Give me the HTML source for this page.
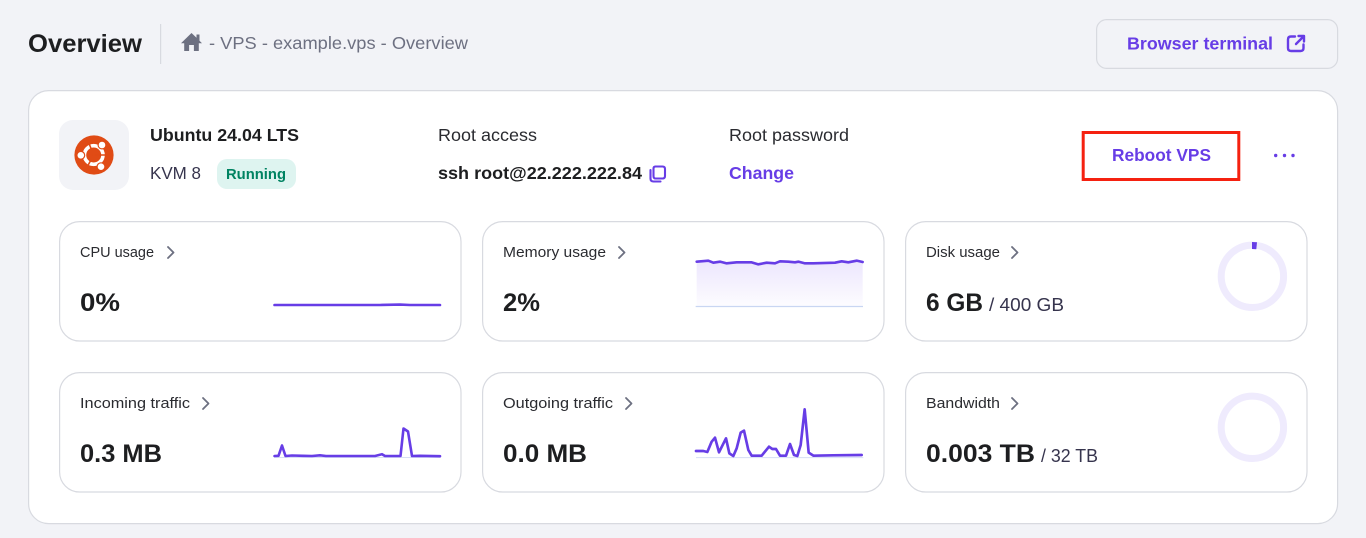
<!DOCTYPE html>
<html lang="en"><head><meta charset="utf-8"><title>Overview</title>
<style>
html,body{margin:0;padding:0;background:#f2f3f7;width:1366px;height:538px;overflow:hidden}
svg{display:block}
text{font-family:"Liberation Sans",sans-serif;fill:#1d1e20;font-size:17.5px}
.b{font-weight:bold}
.p{fill:#673de6}
.t{font-size:15px;fill:#2a2b30}
.v{font-size:25px;font-weight:bold}
.s{font-size:18px;fill:#36344d}
.c{fill:#fff;stroke:#d8dae0;stroke-width:1.2}
.ch{fill:none;stroke:#6d7081;stroke-width:1.8;stroke-linecap:round;stroke-linejoin:round}
.l{fill:none;stroke:#673de6;stroke-width:2.6;stroke-linejoin:round;stroke-linecap:round}
.i{fill:none;stroke:#673de6;stroke-width:2.1;stroke-linejoin:round;stroke-linecap:round}
</style></head>
<body>
<svg width="1366" height="538" viewBox="0 0 1366 538" xmlns="http://www.w3.org/2000/svg">
<defs><linearGradient id="g" x1="0" y1="0" x2="0" y2="1"><stop offset="0" stop-color="#ece6fd"/><stop offset="1" stop-color="#fdfcff"/></linearGradient></defs>

<text x="28" y="52" class="b" style="font-size:25px" textLength="114" lengthAdjust="spacingAndGlyphs">Overview</text>
<rect x="160" y="24" width="1.2" height="40" fill="#d8dae0"/>
<path d="M191.500 33 L196.500 37.800 V34.500 H199.500 V40.700 L202 43.300 H198.800 V51 H193.900 V45 H189.100 V51 H184.200 V43.300 H181 Z" fill="#6d7081"/>
<text x="209" y="49" style="fill:#6d7081" textLength="259" lengthAdjust="spacingAndGlyphs">- VPS - example.vps - Overview</text>

<rect x="1096.600" y="19.600" width="241" height="48.800" rx="10" fill="#f2f3f7" stroke="#d8dae0" stroke-width="1.2"/>
<text x="1127" y="49.500" class="b p" textLength="146" lengthAdjust="spacingAndGlyphs">Browser terminal</text>
<path class="i" style="stroke-width:2.4" d="M1295 36.500 H1291 Q1288 36.500 1288 39.500 V48 Q1288 51 1291 51 H1300.500 Q1303.500 51 1303.500 48 V44.500 M1296 44 L1304 36 M1298.500 36 H1304 V41.500"/>

<rect x="28.600" y="90.600" width="1309" height="433" rx="20" fill="#fff" stroke="#d8dae0" stroke-width="1.2"/>

<rect x="59" y="120" width="70" height="70" rx="14" fill="#f2f3f7"/>
<circle cx="94" cy="155" r="19.600" fill="#e04b15"/>
<circle cx="93.700" cy="155" r="9.300" fill="none" stroke="#fff" stroke-width="3.600"/>
<path d="M93.700 155 L88 141 M93.700 155 L109 155 M93.700 155 L86 169" stroke="#e04b15" stroke-width="1.600"/>
<circle cx="102" cy="145" r="4.500" fill="#e04b15"/><circle cx="102" cy="145" r="3.300" fill="#fff"/>
<circle cx="80.800" cy="155.300" r="4.500" fill="#e04b15"/><circle cx="80.800" cy="155.300" r="3.300" fill="#fff"/>
<circle cx="101" cy="166.700" r="4.500" fill="#e04b15"/><circle cx="101" cy="166.700" r="3.300" fill="#fff"/>

<text x="150" y="141" class="b" textLength="149" lengthAdjust="spacingAndGlyphs">Ubuntu 24.04 LTS</text>
<text x="150" y="179" style="fill:#36344d" textLength="51" lengthAdjust="spacingAndGlyphs">KVM 8</text>
<rect x="217" y="159" width="79" height="30" rx="10" fill="#def4f0"/>
<text x="226" y="179" class="b" style="font-size:15px;fill:#008362" textLength="60" lengthAdjust="spacingAndGlyphs">Running</text>

<text x="438" y="141" style="fill:#2a2b30" textLength="99" lengthAdjust="spacingAndGlyphs">Root access</text>
<text x="438" y="179" class="b" textLength="204" lengthAdjust="spacingAndGlyphs">ssh root@22.222.222.84</text>
<path class="i" d="M655 166.500 H662.500 Q665 166.500 665 169 V176 Q665 178.500 662.500 178.500 H655.500 Q653.500 178.500 653.500 176 V168.500 Q653.500 166.500 655.500 166.500 Z M650.500 170 V178.500 Q650.500 181.500 653.500 181.500 H660.500"/>

<text x="729" y="141" style="fill:#2a2b30" textLength="120" lengthAdjust="spacingAndGlyphs">Root password</text>
<text x="729" y="179" class="b p" textLength="65" lengthAdjust="spacingAndGlyphs">Change</text>

<rect x="1083.200" y="132.500" width="155.600" height="47" fill="#fff" stroke="#f52110" stroke-width="3"/>
<text x="1112" y="161" class="b p" textLength="99" lengthAdjust="spacingAndGlyphs">Reboot VPS</text>
<circle cx="1275.700" cy="155.500" r="1.700" fill="#673de6"/><circle cx="1284.500" cy="155.500" r="1.700" fill="#673de6"/><circle cx="1293" cy="155.500" r="1.700" fill="#673de6"/>

<rect class="c" x="59.600" y="221.600" width="401.400" height="119.400" rx="20"/>
<rect class="c" x="482.600" y="221.600" width="401.400" height="119.400" rx="20"/>
<rect class="c" x="905.600" y="221.600" width="401.400" height="119.400" rx="20"/>
<rect class="c" x="59.600" y="372.600" width="401.400" height="119.400" rx="20"/>
<rect class="c" x="482.600" y="372.600" width="401.400" height="119.400" rx="20"/>
<rect class="c" x="905.600" y="372.600" width="401.400" height="119.400" rx="20"/>

<text class="t" x="80" y="257" textLength="74" lengthAdjust="spacingAndGlyphs">CPU usage</text>
<path class="ch" d="M168 247 L173.500 252.500 L168 258"/>
<text class="v" x="80" y="311" textLength="40" lengthAdjust="spacingAndGlyphs">0%</text>
<path class="l" d="M274.500 305 H380 L400 304.600 L410 305 H440"/>

<text class="t" x="503" y="257" textLength="103" lengthAdjust="spacingAndGlyphs">Memory usage</text>
<path class="ch" d="M619 247 L624.500 252.500 L619 258"/>
<text class="v" x="503" y="311" textLength="37" lengthAdjust="spacingAndGlyphs">2%</text>
<g transform="translate(680 240) scale(.33333)">
<path fill="url(#g)" d="M50 65 L85 62 L100 68 L120 65 L140 70 L170 67 L215 67 L235 73 L260 68 L285 70 L300 64 L325 65 L345 67 L355 65 L375 70 L400 70 L465 68 L485 64 L505 67 L530 62 L548 66 V199 H50 Z"/>
<path fill="none" stroke="#c9d6f2" stroke-width="3.500" d="M47 199.500 H549"/>
<path fill="none" stroke="#673de6" stroke-width="7.800" stroke-linejoin="round" stroke-linecap="round" d="M50 65 L85 62 L100 68 L120 65 L140 70 L170 67 L215 67 L235 73 L260 68 L285 70 L300 64 L325 65 L345 67 L355 65 L375 70 L400 70 L465 68 L485 64 L505 67 L530 62 L548 66"/>
</g>

<text class="t" x="926" y="257" textLength="74" lengthAdjust="spacingAndGlyphs">Disk usage</text>
<path class="ch" d="M1012 247 L1017.500 252.500 L1012 258"/>
<text class="v" x="926" y="311" textLength="57" lengthAdjust="spacingAndGlyphs">6 GB</text>
<text class="s" x="989" y="311" textLength="75" lengthAdjust="spacingAndGlyphs">/ 400 GB</text>
<circle cx="1252.400" cy="276.300" r="31.200" fill="none" stroke="#efebfd" stroke-width="7"/>
<path d="M1252 242 L1257 242.300 L1256.300 249.300 L1252 249 Z" fill="#673de6"/>

<text class="t" x="80" y="408" textLength="110" lengthAdjust="spacingAndGlyphs">Incoming traffic</text>
<path class="ch" d="M203 398 L208.500 403.500 L203 409"/>
<text class="v" x="80" y="462" textLength="82" lengthAdjust="spacingAndGlyphs">0.3 MB</text>
<path fill="none" stroke="#d6def4" stroke-width="1" d="M274 457.500 H440"/>
<path class="l" d="M274.500 456 L278.500 455.800 L282 445.500 L285.500 456 L292 455.500 L303 455.800 L312 456 L320 455.300 L326 456 L375 456 L382 454.200 L385 456 L400.500 456 L403.500 428.500 L408 431.500 L412 456 L420 455.800 L440 456.200"/>

<text class="t" x="503" y="408" textLength="110" lengthAdjust="spacingAndGlyphs">Outgoing traffic</text>
<path class="ch" d="M626 398 L631.500 403.500 L626 409"/>
<text class="v" x="503" y="462" textLength="84" lengthAdjust="spacingAndGlyphs">0.0 MB</text>
<g transform="translate(690 400) scale(.33333)">
<path fill="none" stroke="#d6def4" stroke-width="3" d="M18 173 H520"/>
<path fill="none" stroke="#673de6" stroke-width="8" stroke-linejoin="round" stroke-linecap="round" d="M18 153 L40 153 L52 156 L65 125 L75 113 L87 157 L108 115 L118 160 L130 168 L140 145 L152 98 L162 92 L175 150 L185 167 L215 167 L237 140 L247 147 L258 147 L270 167 L288 167 L300 132 L312 165 L322 168 L332 135 L344 28 L356 158 L370 167 L430 166 L515 165"/>
</g>

<text class="t" x="926" y="408" textLength="74" lengthAdjust="spacingAndGlyphs">Bandwidth</text>
<path class="ch" d="M1012 398 L1017.500 403.500 L1012 409"/>
<text class="v" x="926" y="462" textLength="109" lengthAdjust="spacingAndGlyphs">0.003 TB</text>
<text class="s" x="1041" y="462" textLength="57" lengthAdjust="spacingAndGlyphs">/ 32 TB</text>
<circle cx="1252.400" cy="427.300" r="31.200" fill="none" stroke="#efebfd" stroke-width="7"/>
</svg>
</body></html>
